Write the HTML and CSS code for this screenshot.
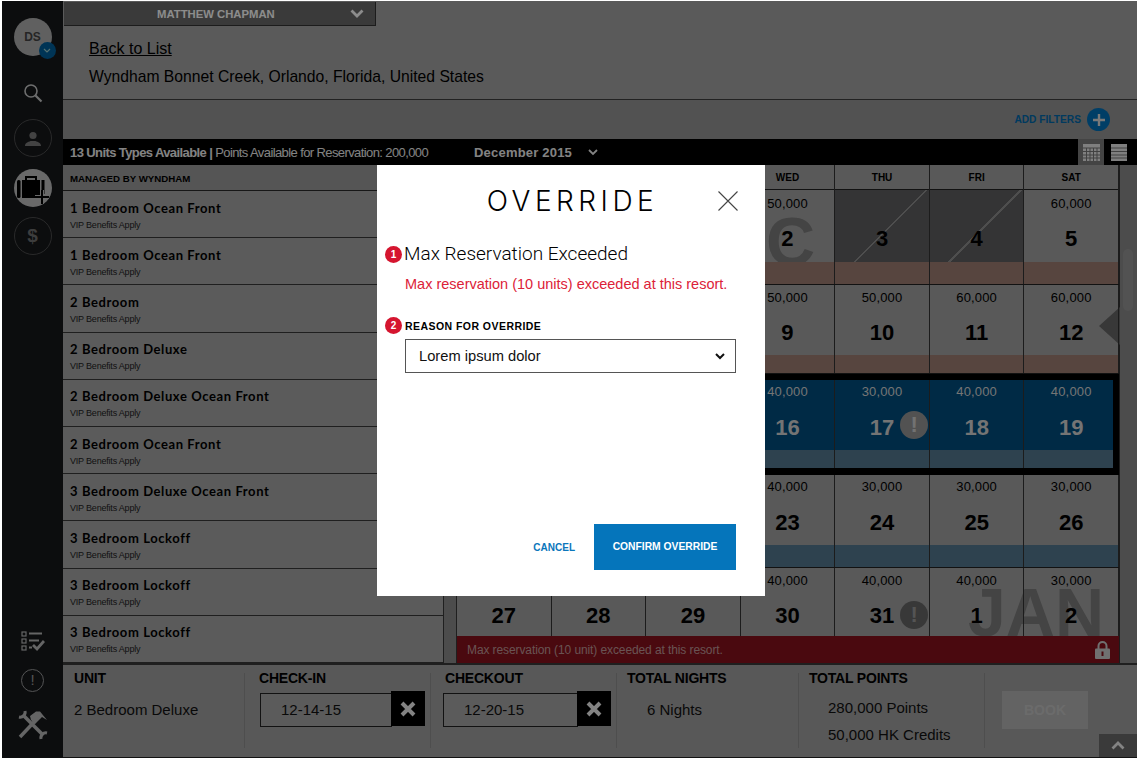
FILE: index.html
```html
<!DOCTYPE html>
<html lang="en">
<head>
	<meta charset="UTF-8">
	<title>Override</title>
	<link rel="stylesheet" href="styles.css">
</head>
<body>
<div class="frame">
	<div class="side">
		<div class="avatar">DS
			<span class="avatar-badge"><svg width="8" height="6" viewBox="0 0 8 6"><path d="M1 1l3 3 3-3" fill="none" stroke="#9cc" stroke-width="1.2"/></svg></span>
		</div>
		<svg class="side-search" width="20" height="20" viewBox="0 0 20 20"><circle cx="8" cy="8" r="6" fill="none" stroke="#c8c8c8" stroke-width="1.6"/><path d="M12.5 12.5l6 6" stroke="#c8c8c8" stroke-width="2.2"/></svg>
		<div class="side-circle"><svg width="16" height="15" viewBox="0 0 16 15"><circle cx="8" cy="4.5" r="3.6" fill="#7a7a7a"/><path d="M0 15c0-3 3-4 5.500-5h5c2.500 1 5.500 2 5.500 5z" fill="#7a7a7a"/></svg></div>
		<div class="side-circle side-on"><svg width="34" height="30" viewBox="0 0 34 30"><path d="M10 6V3h10v3" fill="none" stroke="#000" stroke-width="2"/><rect x="1" y="6" width="3.500" height="18" rx="1.500" fill="#000"/><rect x="6" y="6" width="18" height="18" fill="#000"/><rect x="25.500" y="6" width="3" height="14" fill="#000"/><path d="M26 16v14M19 23h14" stroke="#c0c0c0" stroke-width="4"/><path d="M26 16v14M19 23h14" stroke="#000" stroke-width="2"/></svg></div>
		<div class="side-circle side-dollar">$</div>
		<div class="side-gap"></div>
		<svg class="side-list" width="24" height="22" viewBox="0 0 24 22"><g fill="none" stroke="#b8b8b8" stroke-width="1.200"><rect x="1" y="1" width="4" height="4"/><rect x="1" y="8" width="4" height="4"/><rect x="1" y="15" width="4" height="4"/></g><path d="M8 2.500h13M8 9.500h10M8 16.500h3" stroke="#b8b8b8" stroke-width="2"/><path d="M12 14l4 4 7-8" fill="none" stroke="#b8b8b8" stroke-width="2.800"/></svg>
		<div class="side-warn">!</div>
		<svg class="side-tools" width="30" height="30" viewBox="0 0 30 30"><g fill="none" stroke="#b8b8b8"><path d="M5 5l20 20" stroke-width="3.500"/><path d="M7 1A5 5 0 0 1 1 7M23 29A5 5 0 0 1 29 23" stroke-width="3"/><path d="M2 27L17 11" stroke-width="3.500"/></g><path d="M12 6L18 1.500h4L29 10l-5-3-3 3-4 4-4-4z" fill="#b8b8b8"/></svg>
	</div>
	<div class="main">
		<div class="top">
			<div class="user-tab">
				<span>MATTHEW CHAPMAN</span>
				<svg width="14" height="9" viewBox="0 0 14 9"><path d="M1.500 1.500L7 7l5.500-5.500" fill="none" stroke="#fff" stroke-width="2.800"/></svg>
			</div>
			<a class="back" href="#">Back to List</a>
			<div class="resort">Wyndham Bonnet Creek, Orlando, Florida, United States</div>
		</div>
		<div class="filters">
			<span class="filters-text">ADD FILTERS</span>
			<span class="filters-add"><svg width="12" height="12" viewBox="0 0 12 12"><path d="M6 0v12M0 6h12" stroke="#ddd" stroke-width="2.400"/></svg></span>
		</div>
		<div class="bar">
			<div class="bar-units"><b>13 Units Types Available |</b> Points Available for Reservation: 200,000</div>
			<div class="bar-month">December 2015</div>
			<svg class="bar-chev" width="10" height="7" viewBox="0 0 10 7"><path d="M1 1l4 4 4-4" fill="none" stroke="#eee" stroke-width="1.800"/></svg>
			<div class="bar-views">
				<span class="view view-on"><svg width="17" height="17" viewBox="0 0 17 17"><rect width="17" height="17" fill="#e8e8e8"/><path d="M0 4h17M0 7.500h17M0 11h17M0 14h17M3.500 4v13M7 4v13M10.500 4v13M14 4v13" stroke="#777" stroke-width="1"/></svg></span>
				<span class="view"><svg width="16" height="17" viewBox="0 0 16 17"><rect width="16" height="17" fill="#e8e8e8"/><path d="M0 4h16M0 7.500h16M0 11h16M0 14h16" stroke="#777" stroke-width="1"/></svg></span>
			</div>
		</div>
		<div class="body">
			<div class="units">
				<div class="units-head">MANAGED BY WYNDHAM</div>
				<div class="unit"><h4>1 Bedroom Ocean Front</h4><p>VIP Benefits Apply</p></div>
				<div class="unit"><h4>1 Bedroom Ocean Front</h4><p>VIP Benefits Apply</p></div>
				<div class="unit"><h4>2 Bedroom</h4><p>VIP Benefits Apply</p></div>
				<div class="unit"><h4>2 Bedroom Deluxe</h4><p>VIP Benefits Apply</p></div>
				<div class="unit"><h4>2 Bedroom Deluxe Ocean Front</h4><p>VIP Benefits Apply</p></div>
				<div class="unit"><h4>2 Bedroom Ocean Front</h4><p>VIP Benefits Apply</p></div>
				<div class="unit"><h4>3 Bedroom Deluxe Ocean Front</h4><p>VIP Benefits Apply</p></div>
				<div class="unit"><h4>3 Bedroom Lockoff</h4><p>VIP Benefits Apply</p></div>
				<div class="unit"><h4>3 Bedroom Lockoff</h4><p>VIP Benefits Apply</p></div>
				<div class="unit"><h4>3 Bedroom Lockoff</h4><p>VIP Benefits Apply</p></div>
			</div>
			<div class="gutter"></div>
			<div class="cal">
				<div class="days">
					<span></span><span></span><span></span><span>WED</span><span>THU</span><span>FRI</span><span>SAT</span>
				</div>
				<div class="week week-1 peak">
					<div class="ghost ghost-dec">C</div>
					<div class="cell"><i></i><b></b><s></s></div>
					<div class="cell"><i></i><b></b><s></s></div>
					<div class="cell"><i></i><b></b><s></s></div>
					<div class="cell"><i>50,000</i><b>2</b><s></s></div>
					<div class="cell closed"><i></i><b>3</b><s></s></div>
					<div class="cell closed"><i></i><b>4</b><s></s></div>
					<div class="cell"><i>60,000</i><b>5</b><s></s></div>
				</div>
				<div class="week week-2 peak">
					<div class="cell"><i></i><b></b><s></s></div>
					<div class="cell"><i></i><b></b><s></s></div>
					<div class="cell"><i></i><b></b><s></s></div>
					<div class="cell"><i>50,000</i><b>9</b><s></s></div>
					<div class="cell"><i>50,000</i><b>10</b><s></s></div>
					<div class="cell"><i>60,000</i><b>11</b><s></s></div>
					<div class="cell"><i>60,000</i><b>12</b><s></s></div>
				</div>
				<div class="week week-sel">
					<div class="cell"><i></i><b></b><s></s></div>
					<div class="cell"><i></i><b></b><s></s></div>
					<div class="cell"><i></i><b></b><s></s></div>
					<div class="cell"><i>40,000</i><b>16</b><s></s></div>
					<div class="cell"><i>30,000</i><b>17</b><s></s><span class="flag flag-sel">!</span></div>
					<div class="cell"><i>40,000</i><b>18</b><s></s></div>
					<div class="cell"><i>40,000</i><b>19</b><s></s></div>
				</div>
				<div class="week week-4 low">
					<div class="cell"><i></i><b></b><s></s></div>
					<div class="cell"><i></i><b></b><s></s></div>
					<div class="cell"><i></i><b></b><s></s></div>
					<div class="cell"><i>40,000</i><b>23</b><s></s></div>
					<div class="cell"><i>30,000</i><b>24</b><s></s></div>
					<div class="cell"><i>30,000</i><b>25</b><s></s></div>
					<div class="cell"><i>30,000</i><b>26</b><s></s></div>
				</div>
				<div class="week week-5">
					<div class="ghost ghost-jan">JAN</div>
					<div class="cell"><i></i><b>27</b></div>
					<div class="cell"><i></i><b>28</b></div>
					<div class="cell"><i></i><b>29</b></div>
					<div class="cell"><i>40,000</i><b>30</b></div>
					<div class="cell"><i>40,000</i><b>31</b><span class="flag flag-low">!</span></div>
					<div class="cell"><i>40,000</i><b>1</b></div>
					<div class="cell"><i>30,000</i><b>2</b></div>
					<div class="week-alert">
						<span>Max reservation (10 unit) exceeded at this resort.</span>
						<svg width="15" height="18" viewBox="0 0 15 18"><path d="M3.500 8V5a4 4 0 0 1 8 0v3" fill="none" stroke="#ccc" stroke-width="2"/><rect y="7.500" width="15" height="10.500" rx="1" fill="#ccc"/><rect x="6.500" y="10.500" width="2" height="4.500" fill="#87121d"/></svg>
					</div>
				</div>
			</div>
			<div class="scroll">
				<div class="scroll-thumb"></div>
				<div class="scroll-arrow"></div>
			</div>
		</div>
		<div class="foot">
			<div class="foot-col foot-unit">
				<h5>UNIT</h5>
				<div class="foot-val">2 Bedroom Deluxe</div>
			</div>
			<div class="foot-col">
				<h5>CHECK-IN</h5>
				<div class="date"><span>12-14-15</span><span class="date-x"><svg width="16" height="16" viewBox="0 0 16 16"><path d="M2 2l12 12M14 2L2 14" stroke="#eee" stroke-width="4"/></svg></span></div>
			</div>
			<div class="foot-col">
				<h5>CHECKOUT</h5>
				<div class="date date-out"><span>12-20-15</span><span class="date-x"><svg width="16" height="16" viewBox="0 0 16 16"><path d="M2 2l12 12M14 2L2 14" stroke="#eee" stroke-width="4"/></svg></span></div>
			</div>
			<div class="foot-col foot-nights">
				<h5>TOTAL NIGHTS</h5>
				<div class="foot-val">6 Nights</div>
			</div>
			<div class="foot-col foot-points">
				<h5>TOTAL POINTS</h5>
				<div class="foot-val">280,000 Points</div>
				<div class="foot-val">50,000 HK Credits</div>
			</div>
			<div class="foot-book"><span class="book">BOOK</span></div>
			<div class="to-top"><svg width="14" height="9" viewBox="0 0 14 9"><path d="M1.500 7.500L7 2l5.500 5.500" fill="none" stroke="#eee" stroke-width="2.800"/></svg></div>
		</div>
	</div>
	<div class="dim">
		<div class="modal">
			<div class="modal-head">
				<h2>OVERRIDE</h2>
				<svg class="modal-close" width="20" height="20" viewBox="0 0 20 20"><path d="M0.500 0.500l19 19M19.500 0.500l-19 19" stroke="#444" stroke-width="1.100"/></svg>
			</div>
			<div class="modal-title"><span class="num">1</span><h3>Max Reservation Exceeded</h3></div>
			<p class="modal-error">Max reservation (10 units) exceeded at this resort.</p>
			<div class="modal-label"><span class="num">2</span><label>REASON FOR OVERRIDE</label></div>
			<div class="select">
				<span>Lorem ipsum dolor</span>
				<svg width="10" height="7" viewBox="0 0 10 7"><path d="M1 1l4 4 4-4" fill="none" stroke="#111" stroke-width="2"/></svg>
			</div>
			<div class="modal-foot">
				<a class="cancel" href="#">CANCEL</a>
				<a class="confirm" href="#">CONFIRM OVERRIDE</a>
			</div>
		</div>
	</div>
</div>
</body>
</html>
```

FILE: styles.css
```css
*{
	box-sizing: border-box;
}
body{
	margin: 0;
	background: #fff;
	font-family: "Liberation Sans", Arial, sans-serif;
	color: #000;
}
.frame{
	position: relative;
	display: flex;
	width: 1135px;
	height: 757px;
	margin: 1px 2px 0;
	overflow: hidden;
}

/* sidebar */
.side{
	width: 61px;
	background: #16181b;
	display: flex;
	flex-direction: column;
	align-items: center;
	padding-top: 17px;
}
.avatar{
	position: relative;
	width: 38px;
	height: 38px;
	border-radius: 50%;
	background: #b0b0b0;
	color: #444;
	font-size: 12px;
	font-weight: bold;
	line-height: 38px;
	text-align: center;
}
.avatar-badge{
	position: absolute;
	right: -4px;
	bottom: -3px;
	width: 17px;
	height: 17px;
	border-radius: 50%;
	background: #00609c;
	display: flex;
	align-items: center;
	justify-content: center;
}
.side-search{
	margin-top: 27px;
}
.side-circle{
	width: 38px;
	height: 38px;
	border-radius: 50%;
	border: 1px solid #4c4c4c;
	display: flex;
	align-items: center;
	justify-content: center;
	margin-top: 16px;
}
.side-on{
	background: #c0c0c0;
	border: 0;
	margin-top: 12px;
	padding-top: 2px;
}
.side-dollar{
	margin-top: 10px;
	color: #707070;
	font-size: 19px;
	font-weight: bold;
}
.side-gap{
	flex: 1;
}
.side-warn{
	width: 23px;
	height: 23px;
	border-radius: 50%;
	border: 1.5px solid #999;
	color: #999;
	font-size: 15px;
	line-height: 20px;
	text-align: center;
	margin-top: 16px;
}
.side-tools{
	margin: 18px 0;
}

.main{
	flex: 1;
	display: flex;
	flex-direction: column;
	background: #a2a2a2;
}

/* header */
.top{
	flex: none;
	height: 98px;
	background: #a5a5a5;
	padding-left: 26px;
}
.user-tab{
	width: 312px;
	height: 24px;
	margin: 1px 0 0 -25px;
	background: #6a6a6a;
	color: #fff;
	font-size: 11.300px;
	font-weight: bold;
	display: flex;
	align-items: center;
	padding-left: 93px;
	border-bottom: 1px solid #333;
	border-right: 1px solid #333;
}
.user-tab span{
	width: 193px;
}
.back{
	display: block;
	margin-top: 14px;
	font-size: 16px;
	line-height: 18px;
	color: #000;
}
.resort{
	margin-top: 10px;
	font-size: 15.700px;
	line-height: 18px;
}
.filters{
	flex: none;
	height: 40px;
	background: #959595;
	border-top: 1px solid #3e3e3e;
	display: flex;
	align-items: center;
	justify-content: flex-end;
	padding: 0 27px 0 0;
}
.filters-text{
	color: #006aae;
	font-size: 10.200px;
	font-weight: bold;
	margin-right: 6px;
}
.filters-add{
	width: 23px;
	height: 23px;
	border-radius: 50%;
	background: #0072ba;
	display: flex;
	align-items: center;
	justify-content: center;
}
.bar{
	flex: none;
	height: 26px;
	background: #000;
	display: flex;
	align-items: center;
	color: #eee;
	font-size: 13px;
	padding-left: 7px;
	letter-spacing: -0.6px;
}
.bar-units{
	width: 404px;
}
.bar-month{
	font-weight: bold;
	width: 114px;
	letter-spacing: 0.2px;
}
.bar-views{
	margin-left: auto;
	display: flex;
	margin-right: 5px;
}
.view{
	width: 26px;
	height: 26px;
	display: flex;
	align-items: center;
	justify-content: center;
	margin-left: 2px;
}
.view-on{
	background: #7c7c7c;
}

/* body */
.body{
	flex: none;
	height: 498px;
	display: flex;
}
.units{
	width: 380px;
	display: flex;
	flex-direction: column;
}
.units-head{
	height: 26px;
	padding: 8px 0 0 7px;
	font-size: 9.700px;
	font-weight: bold;
	background: #9c9c9c;
	border-bottom: 1px solid #2a2a2a;
}
.unit{
	flex: 1;
	padding: 8.500px 0 0 7px;
	background: #a6a6a6;
	border-bottom: 1px solid #3a3a3a;
}
.unit h4{
	margin: 0;
	font: 700 13px/16px Lato, sans-serif;
	letter-spacing: 0.6px;
}
.unit p{
	margin: 3px 0 0;
	font-size: 9px;
	line-height: 12px;
	letter-spacing: -0.2px;
	color: #222;
}
.gutter{
	width: 14px;
	background: #8a8a8a;
	border-right: 1px solid #3a3a3a;
	border-left: 1px solid #3a3a3a;
}
.cal{
	width: 663px;
	display: grid;
	grid-template-rows: 25px 95px 89px 101px 93px 95px;
	border-right: 1px solid #333;
}
.days{
	display: grid;
	grid-template-columns: repeat(7, 1fr);
	background: #a2a2a2;
	border-bottom: 1px solid #222;
}
.days span{
	font-size: 10px;
	font-weight: bold;
	line-height: 26px;
	text-align: center;
	border-right: 1px solid #333;
}
.week{
	position: relative;
	display: grid;
	grid-template-columns: repeat(7, 1fr);
	border-bottom: 1px solid #222;
}
.cell{
	position: relative;
	z-index: 1;
	display: flex;
	flex-direction: column;
	border-right: 1px solid #333;
	min-width: 0;
}
.cell i{
	height: 25px;
	font-style: normal;
	font-size: 13px;
	line-height: 25px;
	letter-spacing: 0.15px;
	text-align: center;
}
.week-1 .cell i{
	margin: 1px 0 -1px;
}
.week-sel .cell i, .low .cell i{
	margin: -1px 0 1px;
}
.cell b{
	flex: 1;
	display: flex;
	align-items: center;
	justify-content: center;
	font-size: 22px;
}
.cell s{
	height: 22px;
	display: block;
}
.peak .cell s{
	background: #9e7f74;
}
.low .cell s{
	background: #557891;
}
.closed{
	background: linear-gradient(135deg, transparent calc(50% + 5px), #8e8e8e calc(50% + 5px), #8e8e8e calc(50% + 7px), transparent calc(50% + 7px)) 0 0 / 100% calc(100% - 22px) no-repeat,
		linear-gradient(#5f6062, #5f6062) 0 0 / 100% calc(100% - 22px) no-repeat;
}
.week-2 .cell s{
	height: 18px;
}
.week-sel{
	background: #004d7e;
	color: #d4d4d4;
	border: 0;
}
.week-sel::after{
	content: "";
	position: absolute;
	inset: 0;
	border: solid #000;
	border-width: 6px 6px 7px;
	z-index: 2;
	pointer-events: none;
}
.week-sel .cell{
	padding: 6px 0 7px;
}
.week-sel .cell s{
	height: 18px;
	background: #557891;
}
.week-5{
	grid-template-rows: 1fr 27px;
	border: 0;
}
.week-5 .cell b{
	padding-top: 3px;
}
.ghost{
	position: absolute;
	font-size: 68px;
	font-weight: bold;
	line-height: 68px;
	color: #7c7c7c;
}
.ghost-dec{
	top: 17px;
	right: 304px;
}
.ghost-jan{
	bottom: 17px;
	right: 15px;
}
.flag{
	position: absolute;
	left: 65px;
	width: 28px;
	height: 28px;
	border-radius: 50%;
	background: #8c8c8c;
	color: #d0d0d0;
	font-size: 22px;
	font-weight: bold;
	line-height: 28px;
	text-align: center;
}
.flag-sel{
	top: 37px;
	background: #969696;
}
.flag-low{
	top: 33px;
	background: #666;
	color: #999;
}
.week-alert{
	grid-column: 1 / -1;
	position: relative;
	z-index: 1;
	background: #87121d;
	color: #c09898;
	font-size: 12px;
	display: flex;
	align-items: center;
	justify-content: space-between;
	padding: 0 9px 0 10px;
	letter-spacing: -0.1px;
}
.scroll{
	flex: 1;
	position: relative;
	background: #8a8a8a;
}
.scroll-thumb{
	width: 10px;
	height: 62px;
	margin: 84px 0 0 3px;
	border-radius: 5px;
	background: #969696;
}
.scroll-arrow{
	position: absolute;
	right: 17px;
	top: 142px;
	border: solid transparent;
	border-width: 19px 21px 19px 0;
	border-right-color: #666;
}

/* footer */
.foot{
	position: relative;
	flex: none;
	height: 95px;
	background: #a0a0a0;
	border-top: 2px solid #3a3a3a;
	border-bottom: 1px solid #222;
	display: flex;
	padding: 8px 0 9px;
}
.foot-col{
	width: 186px;
	padding-left: 14px;
	border-right: 1px solid #8e8e8e;
}
.foot-unit{
	width: 182px;
	padding-left: 11px;
}
.foot-nights, .foot-points{
	width: 182px;
	padding-left: 10px;
}
.foot-points{
	width: 186px;
}
.foot-col h5{
	margin: -3px 0 0;
	font-size: 14px;
	line-height: 16px;
	font-weight: bold;
	letter-spacing: -0.2px;
}
.foot-val{
	font-size: 15px;
	line-height: 27px;
	color: #111;
}
.foot-unit .foot-val{
	margin-top: 10px;
}
.foot-nights .foot-val{
	margin: 10px 0 0 20px;
}
.foot-points .foot-val{
	margin-left: 19px;
}
.foot-points h5 + .foot-val{
	margin-top: 8px;
}
.date{
	position: relative;
	width: 132px;
	height: 34px;
	margin: 7px 0 0 1px;
	border: 1px solid #222;
	background: #a6a6a6;
	font-size: 15px;
	line-height: 32px;
	padding-left: 20px;
	color: #111;
}
.date-out{
	width: 135px;
	margin-left: -2px;
}
.date-x{
	position: absolute;
	top: -3px;
	right: -34px;
	width: 34px;
	height: 35px;
	background: #000;
	display: flex;
	align-items: center;
	justify-content: center;
}
.foot-book{
	padding: 18px 0 0 17px;
}
.book{
	display: block;
	width: 86px;
	height: 38px;
	background: #b4b4b4;
	color: #c4c4c4;
	font-size: 14px;
	font-weight: bold;
	line-height: 38px;
	text-align: center;
}
.to-top{
	position: absolute;
	right: 0;
	bottom: 0;
	width: 38px;
	height: 23px;
	background: #6a6a6a;
	display: flex;
	align-items: center;
	justify-content: center;
}

/* modal */
.dim{
	position: absolute;
	inset: 0;
	z-index: 5;
	background: rgba(0,0,0,.45);
}
.modal{
	width: 388px;
	height: 431px;
	margin: 164px 0 0 375px;
	background: #fff;
	display: flex;
	flex-direction: column;
	padding: 0 29px 26px 28px;
}
.modal-head{
	position: relative;
	height: 75px;
	text-align: center;
}
.modal-head h2{
	margin: 0 -4px 0 0;
	padding-top: 20px;
	font: 300 28px/33px Inter, sans-serif;
	letter-spacing: 4.500px;
	color: #000;
}
.modal-close{
	position: absolute;
	right: -2px;
	top: 26px;
}
.num{
	width: 17px;
	height: 17px;
	border-radius: 50%;
	background: #d5152f;
	color: #fff;
	font-size: 10px;
	font-weight: bold;
	line-height: 17px;
	text-align: center;
	margin: 0 3px 0 -20px;
	flex: none;
}
.modal-title{
	display: flex;
	align-items: center;
}
.modal-title .num{
	margin-right: 2px;
}
.modal-title h3{
	margin: 0;
	font: 300 19px/28px Roboto, sans-serif;
}
.modal-error{
	margin: 6px 0 0;
	font-size: 14.500px;
	line-height: 20px;
	color: #dc2238;
}
.modal-label{
	display: flex;
	align-items: center;
	margin-top: 23px;
}
.modal-label label{
	font-size: 10.500px;
	font-weight: bold;
	letter-spacing: 0.45px;
}
.select{
	height: 34px;
	margin-top: 5px;
	border: 1px solid #555;
	display: flex;
	align-items: center;
	justify-content: space-between;
	padding: 0 10px 0 13px;
	font-size: 14.700px;
	color: #111;
}
.modal-foot{
	margin-top: auto;
	display: flex;
	align-items: center;
	justify-content: flex-end;
}
.cancel{
	color: #0b76bb;
	font-size: 10px;
	font-weight: bold;
	text-decoration: none;
	margin-right: 19px;
}
.confirm{
	width: 142px;
	height: 46px;
	background: #0575bb;
	color: #fff;
	font-size: 10.300px;
	font-weight: bold;
	line-height: 46px;
	text-align: center;
	text-decoration: none;
}
```
